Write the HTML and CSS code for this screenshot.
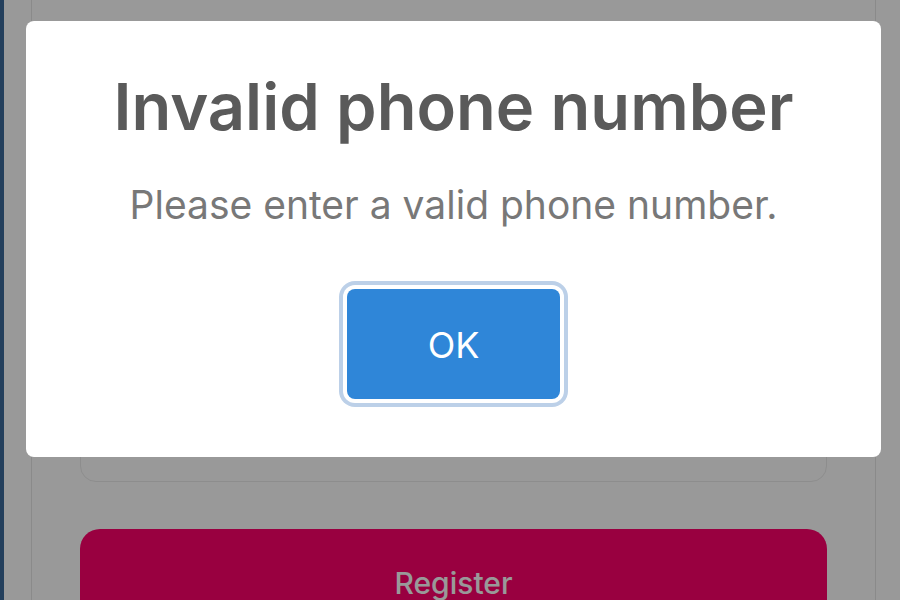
FILE: index.html
```html
<!DOCTYPE html>
<html lang="en">
<head>
  <meta charset="UTF-8" />
  <meta name="viewport" content="width=device-width, initial-scale=1.0" />
  <title>Register</title>
  <link rel="stylesheet" href="styles.css">
</head>
<body>

  <div class="page">
    <div class="sidebar-edge"></div>
    <div class="card">
      <div class="field"></div>
      <button class="register-btn" type="button">Register</button>
    </div>
  </div>

  <div class="backdrop">
    <div class="alert" role="alertdialog">
      <h2 class="alert-title">Invalid phone number</h2>
      <p class="alert-text">Please enter a valid phone number.</p>
      <button class="alert-ok" type="button">OK</button>
    </div>
  </div>

</body>
</html>
```

FILE: styles.css
```css
body {
  margin: 0;
  font-family: Inter, "Noto Sans", Arial, sans-serif;
  background-color: #ffffff;
  overflow: hidden;
}
.page {
  display: flex;
  height: 600px;
}
.sidebar-edge {
  width: 4px;
  flex-shrink: 0;
  background-color: #3b6a9a;
}
.card {
  box-sizing: border-box;
  margin-left: 27px;
  width: 845px;
  flex-shrink: 0;
  border-left: 1px solid #e6e6e6;
  border-right: 1px solid #e6e6e6;
  padding: 418px 48px 0 48px;
  display: flex;
  flex-direction: column;
  gap: 47px;
}
.field {
  flex-shrink: 0;
  height: 62px;
  border: 1px solid #ececec;
  border-radius: 16px;
}
.register-btn {
  flex-shrink: 0;
  height: 100px;
  border: none;
  border-radius: 20px;
  background-color: #ff006b;
  color: #ffffff;
  font-family: inherit;
  font-size: 30px;
  font-weight: 500;
  padding: 8px 0 0;
}

/* dimmed overlay + alert box */
.backdrop {
  position: fixed;
  inset: 0;
  background-color: rgba(0, 0, 0, 0.4);
  display: flex;
  align-items: flex-start;
  padding: 21px 0 0 26px;
}
.alert {
  width: 855px;
  box-sizing: border-box;
  background-color: #ffffff;
  border-radius: 8px;
  padding: 47px 20px 58px;
  display: flex;
  flex-direction: column;
  align-items: center;
  text-align: center;
}
.alert-title {
  margin: 0;
  font-size: 65px;
  line-height: 1.2;
  font-weight: 600;
  color: #5a5a5a;
}
.alert-text {
  margin: 36px 0 0;
  font-size: 39px;
  line-height: 1.2;
  color: #787878;
}
.alert-ok {
  margin-top: 60px;
  width: 213px;
  height: 110px;
  border: none;
  border-radius: 8px;
  background-color: #2f86d8;
  color: #ffffff;
  font-family: inherit;
  font-size: 36px;
  padding: 2px 0 0;
  box-shadow: 0 0 0 4px #ffffff, 0 0 0 8px #bcd0e8;
}
```
